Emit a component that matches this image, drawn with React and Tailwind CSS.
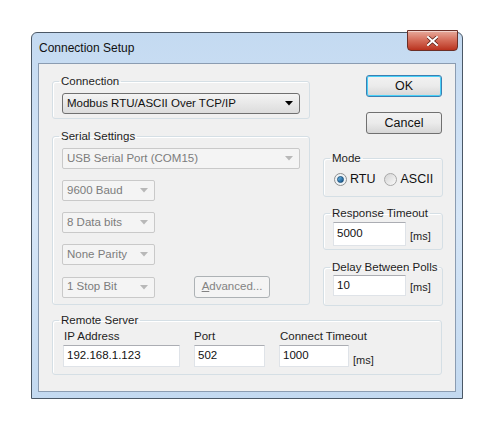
import React from 'react';

const font = { fontFamily: '"Liberation Sans", Arial, sans-serif' };

const Group = ({ title, className = '', inner = '', children }) => (
  <fieldset className={`min-w-0 border border-[#d5dfe5] rounded-[3px] shadow-[inset_1px_1px_0_#ffffff] ${className}`}>
    <legend className="ml-[6px] px-[2px] whitespace-nowrap text-left leading-[14px] text-[11.5px] text-[#1e1e1e]">{title}</legend>
    <div className={inner}>{children}</div>
  </fieldset>
);

const Arrow = ({ disabled }) => (
  <svg width="8" height="5" viewBox="0 0 8 5" className="shrink-0">
    <path d="M0 0 L8 0 L4 4.5 Z" fill={disabled ? '#b8b8b8' : '#000'} />
  </svg>
);

const Combo = ({ value, width, disabled }) =>
  disabled ? (
    <div
      className={`${width} h-[21px] flex items-center justify-between pl-[4px] pr-[6px] border border-[#c9c9c9] rounded-[2px] bg-[#f4f4f4] text-[#7c7c7c]`}
    >
      <span>{value}</span>
      <Arrow disabled />
    </div>
  ) : (
    <div
      className={`${width} h-[21px] flex items-center justify-between pl-[4px] pr-[6px] border border-[#707070] rounded-[3px] bg-gradient-to-b from-[#f4f4f4] to-[#dcdcdc] text-[#111]`}
    >
      <span>{value}</span>
      <Arrow />
    </div>
  );

const Button = ({ children, primary, disabled, className = '' }) => (
  <div
    className={`w-[76px] h-[22px] flex items-center justify-center rounded-[3px] border ${
      primary
        ? 'border-[#3c7fb1] shadow-[inset_0_0_0_1px_#48d0f8]'
        : disabled
        ? 'border-[#adb2b5]'
        : 'border-[#707070]'
    } ${disabled ? 'bg-[#f4f4f4] text-[#838383]' : 'bg-gradient-to-b from-[#f2f2f2] via-[#ebebeb] to-[#d6d6d6] text-[#111]'} ${className}`}
  >
    {children}
  </div>
);

const Input = ({ value, width, height = 'h-[22px]' }) => (
  <div
    className={`${width} ${height} flex items-center px-[3px] bg-white border border-[#dfe3e8] border-t-[#abadb3] text-[#111]`}
  >
    {value}
  </div>
);

const Radio = ({ checked, label }) => (
  <div className="flex items-center gap-[3px]">
    {checked ? (
      <div className="w-[13px] h-[13px] rounded-full border border-[#8e8f8f] bg-[#eef3f6] flex items-center justify-center">
        <div className="w-[7px] h-[7px] rounded-full bg-gradient-to-br from-[#6ec0ef] to-[#0f4f86] border border-[#1a4f7a]" />
      </div>
    ) : (
      <div className="w-[13px] h-[13px] rounded-full border border-[#a8a8a8] bg-gradient-to-br from-[#d4d4d4] to-[#fafafa]" />
    )}
    <span className="text-[12.5px] text-[#111]">{label}</span>
  </div>
);

export default function App() {
  return (
    <div className="w-[500px] h-[439px] bg-white pt-[32px] pl-[31px] text-[11.5px] text-[#1e1e1e]" style={font}>
      {/* Window */}
      <div className="w-[432px] h-[367px] flex flex-col rounded-t-[6px] border border-[#4b5866] bg-gradient-to-b from-[#c4daf1] via-[#d6e6f7] to-[#c3d9f0] px-[6px] pb-[6px]">
        {/* Title bar */}
        <div className="h-[30px] flex items-start justify-between">
          <span className="mt-[6px] ml-[1px] text-[12px] text-[#111]">Connection Setup</span>
          <div className="-mt-[3px] -mr-[2px] w-[51px] h-[21px] rounded-b-[4px] border border-[#6b2f27] bg-gradient-to-b from-[#e6aa9c] via-[#d46b58] to-[#b9311d] flex items-center justify-center shadow-[inset_0_1px_0_rgba(255,255,255,0.5)]">
            <svg width="11" height="10" viewBox="0 0 11 10">
              <path d="M1 1 L10 9 M10 1 L1 9" stroke="#5a1e14" strokeWidth="3.4" strokeLinecap="square" />
              <path d="M1 1 L10 9 M10 1 L1 9" stroke="#ffffff" strokeWidth="2" strokeLinecap="square" />
            </svg>
          </div>
        </div>

        {/* Client area */}
        <div className="flex-1 border border-[#8b9cb1] bg-[#f0f0f0] pt-[10px] px-[13px] flex flex-col">
          <div className="flex gap-[13px]">
            {/* Left column */}
            <div className="w-[259px] flex flex-col">
              <Group title="Connection" inner="px-[9px] pb-[4px] pt-[5px]">
                <Combo value="Modbus RTU/ASCII Over TCP/IP" width="w-[238px]" />
              </Group>

              <Group title="Serial Settings" className="mt-[10px]" inner="px-[9px] pb-[6px] pt-[5px] flex flex-col gap-[11px]">
                <Combo value="USB Serial Port (COM15)" width="w-[238px]" disabled />
                <Combo value="9600 Baud" width="w-[93px]" disabled />
                <Combo value="8 Data bits" width="w-[93px]" disabled />
                <Combo value="None Parity" width="w-[93px]" disabled />
                <div className="flex items-center gap-[39px]">
                  <Combo value="1 Stop Bit" width="w-[93px]" disabled />
                  <Button disabled>
                    <span>
                      <span className="underline">A</span>dvanced...
                    </span>
                  </Button>
                </div>
              </Group>
            </div>

            {/* Right column */}
            <div className="w-[120px] flex flex-col">
              <div className="flex flex-col items-end pr-[1px]">
                <Button primary className="mt-[1px] text-[12.5px]">OK</Button>
                <Button className="mt-[15px] h-[21px] text-[12.5px]">Cancel</Button>
              </div>

              <Group title="Mode" className="mt-[17px]" inner="px-[10px] pb-[10px] pt-[7px]">
                <div className="h-[14px] flex items-center gap-[9px]">
                  <Radio checked label="RTU" />
                  <Radio label="ASCII" />
                </div>
              </Group>

              <Group title="Response Timeout" className="mt-[9px]" inner="px-[9px] pb-[3px] pt-[2px] flex items-end gap-[4px]">
                <Input value="5000" width="w-[73px]" height="h-[24px]" />
                <span className="mb-[2px] text-[11px]">[ms]</span>
              </Group>

              <Group title="Delay Between Polls" className="mt-[10px]" inner="px-[9px] pb-[9px] pt-[1px] flex items-end gap-[4px]">
                <Input value="10" width="w-[73px]" height="h-[21px]" />
                <span className="mb-[1px] text-[11px]">[ms]</span>
              </Group>
            </div>
          </div>

          <Group title="Remote Server" className="mt-[7px]" inner="px-[10px] pb-[7px] pt-[2px] flex gap-[14px]">
            <div className="flex flex-col">
              <span className="h-[16px] leading-[14px] pl-[1px]">IP Address</span>
              <Input value="192.168.1.123" width="w-[117px]" />
            </div>
            <div className="flex flex-col">
              <span className="h-[16px] leading-[14px]">Port</span>
              <Input value="502" width="w-[71px]" />
            </div>
            <div className="flex flex-col">
              <span className="h-[16px] leading-[14px] pl-[1px]">Connect Timeout</span>
              <div className="flex items-end gap-[4px]">
                <Input value="1000" width="w-[70px]" />
                <span className="-mb-[1px] text-[11px]">[ms]</span>
              </div>
            </div>
          </Group>
        </div>
      </div>
    </div>
  );
}
